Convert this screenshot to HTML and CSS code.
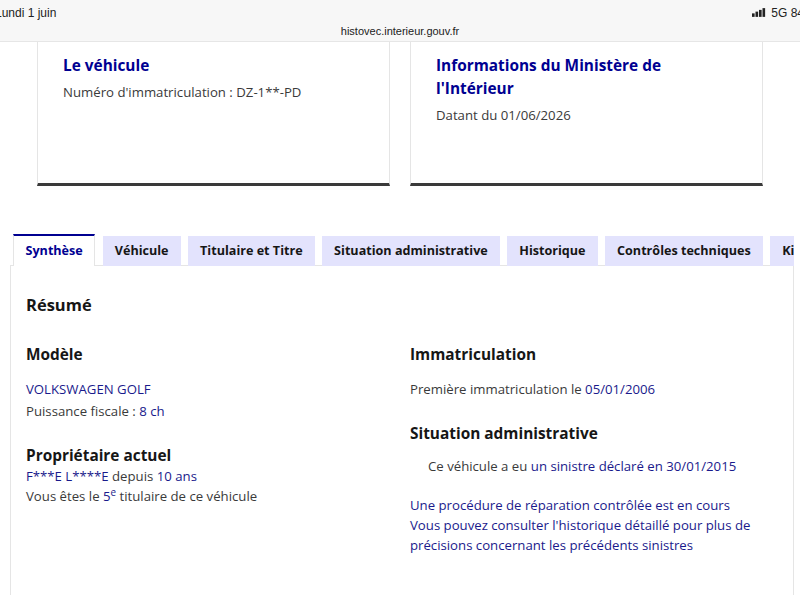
FILE: index.html
```html
<!DOCTYPE html>
<html lang="fr">
<head>
    <meta charset="UTF-8">
    <meta name="viewport" content="width=device-width, initial-scale=1.0">
    <title>HistoVec</title>
    <link rel="stylesheet" href="styles.css">
</head>
<body>
    <div class="browser-bar">
        <div class="status-row">
            <span class="clock">Lundi 1 juin</span>
            <span class="signal">
                <svg viewBox="0 0 16 10" width="14" height="9">
                    <rect x="0" y="6" width="3" height="4"/>
                    <rect x="4" y="4" width="3" height="6"/>
                    <rect x="8" y="2" width="3" height="8"/>
                    <rect x="12" y="0" width="3" height="10"/>
                </svg>
                5G 84 %
            </span>
        </div>
        <div class="url">histovec.interieur.gouv.fr</div>
    </div>

    <div class="cards">
        <div class="card">
            <h3 class="card-title">Le véhicule</h3>
            <p class="card-text">Numéro d'immatriculation : DZ-1**-PD</p>
        </div>
        <div class="card">
            <h3 class="card-title">Informations du Ministère de l'Intérieur</h3>
            <p class="card-text">Datant du 01/06/2026</p>
        </div>
    </div>

    <div class="tabs">
        <ul class="tab-list">
            <li class="tab active">Synthèse</li>
            <li class="tab">Véhicule</li>
            <li class="tab">Titulaire et Titre</li>
            <li class="tab">Situation administrative</li>
            <li class="tab">Historique</li>
            <li class="tab">Contrôles techniques</li>
            <li class="tab">Kilométrage</li>
        </ul>

        <div class="tab-panel">
            <h2 class="panel-title">Résumé</h2>
            <div class="summary">
                <div class="col">
                    <h4>Modèle</h4>
                    <p class="link">VOLKSWAGEN GOLF</p>
                    <p class="power">Puissance fiscale : <span class="link">8 ch</span></p>

                    <h4 class="owner">Propriétaire actuel</h4>
                    <p class="tight"><span class="link">F***E L****E</span> depuis <span class="link">10 ans</span></p>
                    <p class="tight">Vous êtes le <span class="link">5<sup>e</sup></span> titulaire de ce véhicule</p>
                </div>
                <div class="col">
                    <h4>Immatriculation</h4>
                    <p>Première immatriculation le <span class="link">05/01/2006</span></p>

                    <h4 class="admin">Situation administrative</h4>
                    <p class="indent">Ce véhicule a eu <span class="link">un sinistre déclaré en 30/01/2015</span></p>
                    <p class="link note">Une procédure de réparation contrôlée est en cours<br>
                    Vous pouvez consulter l'historique détaillé pour plus de précisions concernant les précédents sinistres</p>
                </div>
            </div>
        </div>
    </div>
</body>
</html>
```

FILE: styles.css
```css
:root {
    --blue: #000091;
    --link: #1a1a8c;
    --text: #3a3a3a;
    --title: #161616;
    --tab-bg: #e3e3fd;
    --border: #e5e5e5;
}

body {
    margin: 0;
    font-family: "Open Sans", "Noto Sans", sans-serif;
    font-size: 13.2px;
    color: var(--text);
    background: white;
    overflow: hidden;
}

p, h2, h3, h4, ul {
    margin: 0;
}

/* browser chrome */
.browser-bar {
    height: 42px;
    background: #f7f7f7;
    border-bottom: 1px solid #e6e6e6;
    box-sizing: border-box;
    font-family: "Liberation Sans", sans-serif;
    color: #222;
}
.status-row {
    display: flex;
    justify-content: space-between;
    height: 25px;
    align-items: center;
    font-size: 12px;
    margin-left: -5px;
    margin-right: -18px;
}
.signal {
    display: flex;
    align-items: center;
    gap: 5px;
}
.signal svg {
    fill: #222;
}
.url {
    text-align: center;
    font-size: 11px;
    line-height: 12px;
}

/* cards */
.cards {
    display: flex;
    justify-content: center;
    gap: 20px;
}
.card {
    width: 353px;
    box-sizing: border-box;
    height: 144px;
    padding: 12px 25px 0;
    border: 1px solid var(--border);
    border-top: none;
    border-bottom: 3px solid #3a3a3a;
}
.card-title {
    color: var(--blue);
    font-size: 15.4px;
    line-height: 23px;
    font-weight: 700;
    margin-bottom: 5px;
    padding-right: 40px;
}
.card-text {
    line-height: 20px;
}

/* tabs */
.tabs {
    margin-top: 48px;
    margin-left: 10px;
    margin-right: 6px;
}
.tab-list {
    list-style: none;
    padding: 0 0 0 3px;
    display: flex;
    gap: 7.5px;
    white-space: nowrap;
    align-items: flex-end;
    overflow: hidden;
    margin-bottom: -1px;
}
.tab {
    background: var(--tab-bg);
    color: var(--title);
    font-weight: 700;
    font-size: 12.6px;
    height: 30px;
    line-height: 30px;
    padding: 0 12px;
    flex-shrink: 0;
}
.tab.active {
    background: white;
    color: var(--blue);
    border-top: 2px solid var(--blue);
    border-left: 1px solid var(--border);
    border-right: 1px solid var(--border);
    height: 30px;
    padding: 0 11.5px;
}
.tab-panel {
    border: 1px solid var(--border);
    border-bottom: none;
    padding: 26px 15px 40px;
}
.panel-title {
    color: var(--title);
    font-size: 16.5px;
    font-weight: 700;
    line-height: 26px;
    margin-bottom: 25px;
}
.summary {
    display: grid;
    grid-template-columns: 1fr 1fr;
    column-gap: 16px;
}
.summary h4 {
    color: var(--title);
    font-size: 15.4px;
    font-weight: 700;
    line-height: 24px;
    margin-bottom: 12px;
}
.summary p {
    line-height: 20px;
}
.summary p.power {
    margin-top: 2px;
}
.summary h4.owner {
    margin-top: 24px;
    margin-bottom: 0;
    line-height: 22px;
}
.summary p.tight {
    line-height: 19.5px;
}
.summary h4.admin {
    margin-top: 23px;
    margin-bottom: 10px;
}
.link {
    color: var(--link);
}
sup {
    font-size: 0.75em;
    line-height: 0;
}
.indent {
    padding-left: 18px;
}
.note {
    margin-top: 19px;
}
```
